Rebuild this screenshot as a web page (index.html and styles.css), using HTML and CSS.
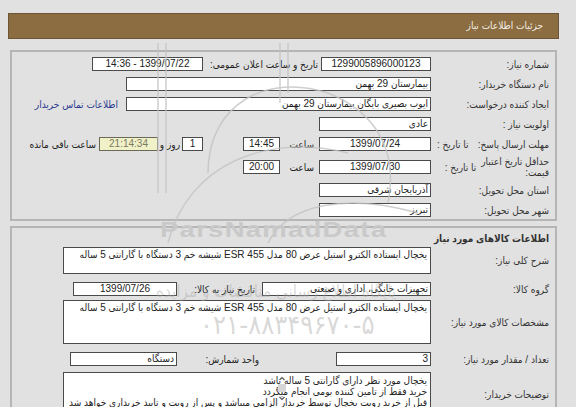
FILE: index.html
```html
<!DOCTYPE html>
<html lang="fa">
<head>
<meta charset="utf-8">
<title>جزئیات اطلاعات نیاز</title>
<link rel="stylesheet" href="styles.css">
</head>
<body>
<div class="page" dir="rtl">
  <div class="hdr">جزئیات اطلاعات نیاز</div>

  <div class="box box1">
    <div class="row">
      <div class="lbl">شماره نیاز:</div>
      <div class="in w110 c">1299005896000123</div>
      <div class="lbl-mid">تاریخ و ساعت اعلان عمومی:</div>
      <div class="in w111 c">1399/07/22 - 14:36</div>
    </div>
    <div class="row">
      <div class="lbl">نام دستگاه خریدار:</div>
      <div class="in w305">بیمارستان 29 بهمن</div>
    </div>
    <div class="row">
      <div class="lbl">ایجاد کننده درخواست:</div>
      <div class="in w305">ایوب بصیری  بایگان بیمارستان 29 بهمن</div>
      <a class="link" href="#">اطلاعات تماس خریدار</a>
    </div>
    <div class="row">
      <div class="lbl">اولویت نیاز :</div>
      <div class="in w112">عادی</div>
    </div>
    <div class="row">
      <div class="lbl split"><span>مهلت ارسال پاسخ:</span><span>تا تاریخ :</span></div>
      <div class="in w112 c">1399/07/24</div>
      <div class="t-saat">ساعت</div>
      <div class="in w37 c">14:45</div>
      <div class="in w21 c days">1</div>
      <div class="t-rooz">روز و</div>
      <div class="in w59 c remain">21:14:34</div>
      <div class="t-remain">ساعت باقی مانده</div>
    </div>
    <div class="row tall">
      <div class="lbl split2"><span class="two">حداقل تاریخ اعتبار<br>قیمت:</span><span class="tt">تا تاریخ :</span></div>
      <div class="in w112 c">1399/07/30</div>
      <div class="t-saat">ساعت</div>
      <div class="in w37 c">20:00</div>
    </div>
    <div class="row">
      <div class="lbl">استان محل تحویل:</div>
      <div class="in w112">آذربایجان شرقی</div>
    </div>
    <div class="row">
      <div class="lbl">شهر محل تحویل:</div>
      <div class="in w112">تبریز</div>
    </div>
  </div>

  <div class="box box2">
    <div class="title">اطلاعات کالاهای مورد نیاز</div>
    <div class="row2 ta1">
      <div class="lbl2">شرح کلی نیاز:</div>
      <div class="area">یخچال ایستاده الکترو استیل عرض 80 مدل ESR 455 شیشه خم 3 دستگاه با گارانتی 5 ساله</div>
    </div>
    <div class="row2 grp">
      <div class="lbl2">گروه کالا:</div>
      <div class="in w169">تجهیزات خانگی، اداری و صنعتی</div>
      <div class="lbl-mid2">تاریخ نیاز به کالا:</div>
      <div class="in w104 c">1399/07/26</div>
    </div>
    <div class="row2 ta2">
      <div class="lbl2">مشخصات کالای مورد نیاز:</div>
      <div class="area">یخچال ایستاده الکترو استیل عرض 80 مدل ESR 455 شیشه خم 3 دستگاه با گارانتی 5 ساله</div>
    </div>
    <div class="row2 cnt">
      <div class="lbl2">تعداد / مقدار مورد نیاز:</div>
      <div class="cell169"><div class="in w95">3</div></div>
      <div class="lbl-mid3">واحد شمارش:</div>
      <div class="in w107">دستگاه</div>
    </div>
    <div class="row2 ta3">
      <div class="lbl2">توضیحات خریدار:</div>
      <div class="area desc">
        <div>یخچال مورد نظر دارای گارانتی 5 ساله باشد</div>
        <div>خرید فقط از تامین کننده بومی انجام میگردد</div>
        <div>قبل از خرید رویت یخچال توسط خریدار الزامی میباشد و پس از رویت و تایید خریداری خواهد شد</div>
        <svg class="sbar" width="10" height="30" viewBox="0 0 10 30">
          <path class="chev" d="M2.5 6 L5 3.5 L7.5 6" />
          <rect class="thumb" x="1" y="10" width="8" height="8" />
          <path class="chev" d="M2.5 23 L5 25.5 L7.5 23" />
        </svg>
      </div>
    </div>
  </div>

  <div class="wm">
    <svg class="wm-logo" width="300" height="200" viewBox="0 0 300 200">
      <path d="M10 0 V150 M18 0 V150 M140 0 V50 M132 0 V60" />
      <path d="M60 130 C60 60 120 30 180 50 C230 70 250 110 240 160" />
      <path d="M20 200 C40 120 120 90 200 110" />
      <path d="M120 200 C140 160 200 150 270 170" />
    </svg>
    <div class="wm-brand">ParsNamadData</div>
    <div class="wm-site">پایگاه اطلاع رسانی مناقصات و مزایده</div>
    <div class="wm-tel">۰۲۱-۸۸۳۴۹۶۷۰-۵</div>
  </div>
</div>
</body>
</html>
```

FILE: styles.css
```css
html, body {
  margin: 0;
  padding: 0;
  background: #e1e1e1;
}
body {
  font-family: "Liberation Sans", "DejaVu Sans Condensed", "DejaVu Sans", sans-serif;
  font-size: 10px;
  color: #222;
}
.page {
  position: relative;
  width: 551px;
  margin: 13px 0 0 8px;
  height: 394px;
  overflow: hidden;
}
.page * { white-space: nowrap; }
.hdr {
  height: 24px;
  line-height: 24px;
  background: #8c6c41;
  border: 1px solid #6d5534;
  color: #f4efe6;
  padding-right: 15px;
  font-size: 10px;
}
.box {
  margin: 11px 2px 0 2px;
  border: 2px solid #b5b5b5;
  box-sizing: border-box;
}
.box1 {
  padding: 2px 6px 1px 0;
  height: 171px;
}
.box2 {
  margin-top: 5px;
  padding: 0 6px 0 0;
  height: 200px;
}
.row {
  display: flex;
  align-items: center;
  height: 20px;
}
.row.tall { height: 26px; }
.lbl {
  width: 118px;
  flex: none;
  color: #333;
}
.lbl.split, .lbl.split2 {
  display: flex;
  justify-content: space-between;
  align-items: center;
  padding-left: 6px;
  box-sizing: border-box;
}
.lbl.split2 { padding-left: 0; justify-content: flex-start; }
.lbl.split2 .two { line-height: 11px; }
.lbl.split2 .tt { margin-right: 5px; }
.in {
  flex: none;
  box-sizing: border-box;
  height: 14px;
  line-height: 12px;
  border: 1px solid #4a4a4a;
  background: #fff;
  padding: 0 2px;
  overflow: hidden;
  color: #222;
}
.in.c { text-align: center; }
.w95 { width: 95px; }
.w110 { width: 110px; }
.w111 { width: 111px; }
.w112 { width: 112px; }
.w305 { width: 305px; }
.w37 { width: 37px; }
.w21 { width: 21px; }
.w59 { width: 59px; }
.w169 { width: 169px; }
.w104 { width: 104px; }
.w107 { width: 107px; }
.lbl-mid {
  width: 118px;
  flex: none;
  padding-right: 3px;
  box-sizing: border-box;
}
.link {
  margin-right: 8px;
  color: #2b3a8f;
  text-decoration: none;
}
.t-saat {
  width: 39px;
  flex: none;
  padding-right: 5px;
  box-sizing: border-box;
}
.days { margin-right: 40px; }
.t-rooz {
  width: 24px;
  flex: none;
  padding-right: 2px;
  box-sizing: border-box;
}
.remain {
  background: #f1f1c9;
  color: #7b7a5e;
  border-color: #6a6a55;
}
.t-remain { margin-right: 3px; }

.title {
  font-weight: bold;
  height: 17px;
  line-height: 18px;
  padding-top: 2px;
  color: #333;
}
.row2 {
  display: flex;
  align-items: center;
  height: 20px;
}
.lbl2 {
  width: 118px;
  flex: none;
  color: #333;
}
.row2.ta1 { height: 27px; }
.row2.grp { margin-top: 5px; }
.row2.ta2 { height: 44px; margin-top: 1px; }
.row2.cnt { margin-top: 5px; }
.row2.ta3 { height: 40px; margin-top: 3px; align-items: flex-start; }
.row2.ta3 .lbl2 { padding-top: 17px; }
.area {
  position: relative;
  width: 368px;
  flex: none;
  box-sizing: border-box;
  border: 1px solid #4a4a4a;
  background: #fff;
  padding: 1px 3px;
  line-height: 12px;
  align-self: stretch;
  overflow: hidden;
}
.area.desc { line-height: 11px; padding-top: 2px; }
.lbl-mid2 {
  width: 85px;
  flex: none;
  padding-right: 7px;
  box-sizing: border-box;
}
.cell169 { width: 169px; flex: none; }
.lbl-mid3 {
  width: 85px;
  flex: none;
  padding-right: 3px;
  box-sizing: border-box;
}
.sbar {
  position: absolute;
  top: 1px;
  right: 143px;
}
.sbar .chev {
  fill: none;
  stroke: #555;
  stroke-width: 1.2;
}
.sbar .thumb { fill: #d6d6d6; }

.wm {
  position: absolute;
  inset: 0;
  pointer-events: none;
}
.wm-logo {
  position: absolute;
  left: 140px;
  top: 30px;
  fill: none;
  stroke: #c4c4c4;
  stroke-width: 1.5;
  opacity: 0.8;
}
.wm-brand {
  position: absolute;
  left: 152px;
  top: 204px;
  font-family: "Liberation Sans", sans-serif;
  font-weight: bold;
  font-size: 22px;
  letter-spacing: 1px;
  color: #c9c9c9;
  transform: scaleX(1.25);
  transform-origin: left center;
}
.wm-site {
  position: absolute;
  left: 148px;
  top: 268px;
  font-size: 17px;
  color: rgba(170,170,170,0.45);
}
.wm-tel {
  position: absolute;
  left: 192px;
  top: 296px;
  font-size: 27px;
  color: rgba(170,170,170,0.45);
}
```
